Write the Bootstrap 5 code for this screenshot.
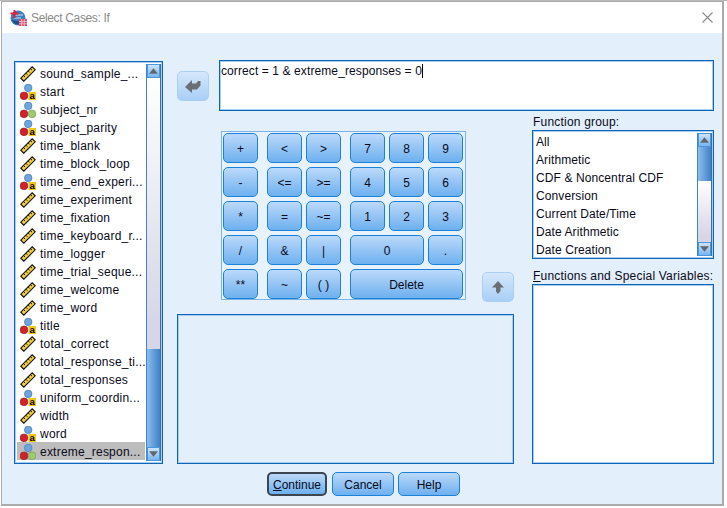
<!doctype html>
<html lang="en"><head><meta charset="utf-8"><title>Select Cases: If</title>
<link href="https://cdn.jsdelivr.net/npm/bootstrap@5.3.0/dist/css/bootstrap.min.css" rel="stylesheet">
<style>
html,body{height:100%;overflow:hidden}
body{background:#fff;font:12px/18px "Liberation Sans",Arial,sans-serif;color:#0a0a1a}
.strip{height:1px;background:#b9b9b9}
.win{width:723px;height:505px;margin-left:1px;border:1px solid #ababab;border-right-width:2px;border-bottom-width:2px;background:#e3effb;display:flex;flex-direction:column}
.titlebar{height:31px;flex:none;background:#fff;color:#8b8b8b;padding-left:8px;gap:4px}
.titletext{letter-spacing:-.35px}
.closex{margin-left:auto;margin-right:9px}
.main{padding:27px 0 0 12px;gap:14px}
.vars{width:149px;height:403px;margin-top:1px;letter-spacing:.22px}
.boxed{border:1px solid #0d65b8;box-shadow:0 0 0 1px #a9cdf0 inset;background:#fff}
.vars,.funcs{position:relative;padding:2px 17px 2px 2px}
.itemrow{height:18px;line-height:18px;white-space:nowrap;padding:0;border:0;background:transparent;color:inherit;display:flex;align-items:center}
.vars .itemrow{padding-left:3px;gap:4px}
.vars .itemrow span{padding-top:2px}
.vars .itemrow svg{flex:none;margin-top:2px}
.itemrow.sel{background:#bdbdbd}
.sbar{position:absolute;top:2px;bottom:2px;right:1px;width:15px;display:flex;flex-direction:column;border-left:1px solid #3e86cb;border-right:1px solid #3d6f9f;background:linear-gradient(90deg,#fff,#cfcfe0)}
.sbtn{height:14px;flex:none;background:linear-gradient(#cfe3fb,#79b4f0);display:flex;align-items:center;justify-content:center;border:1px solid #4a97e0}
.strack{flex:1;background:linear-gradient(#fff,#d6d6e6 90%)}
.sthumb{background:linear-gradient(90deg,#8fbcec,#3e81c8)}
.thumb1{height:98px}
.thumb2{height:34px}
.centerarea{width:537px}
.toprow{gap:10px;height:51px}
.movebtn{width:32px;height:30px;padding:0;border:1px solid #a9cff3;border-radius:5px;background:linear-gradient(#d5e7fb,#a9cff6);display:flex;align-items:center;justify-content:center}
.arrowdown{margin-top:11px}
.expr{width:495px;height:51px;padding:3px 1px;line-height:14px;letter-spacing:.1px}
.caret{display:inline-block;width:1px;height:14px;background:#000;vertical-align:-3px}
.lowerrow{gap:18px}
.midcol{width:337px}
.pad-row{margin-top:20px;margin-left:44px;align-items:flex-end;justify-content:space-between;height:171px}
.calc{width:245px;height:169px;border:1px solid #7fb2e6;padding:1px;gap:9px;background:#e8f2fc;margin-bottom:2px}
.calcgrid{display:grid;grid-auto-rows:30px;row-gap:4px;column-gap:4px;grid-template-columns:repeat(var(--n),35px)}
.g1{--n:1}.g2{--n:2}.g3{--n:3}
.key{padding:1px 0 0;font-size:12px;line-height:1;color:#0a0a1a;border:1px solid #1b82dc;border-radius:5px;background:linear-gradient(#bcd9fa,#6db0ef)}
.key:hover{color:#0a0a1a;border-color:#1b82dc;background:linear-gradient(#bcd9fa,#6db0ef)}
.sp2{grid-column:span 2}.sp3{grid-column:span 3}
.msgbox{height:150px;margin-top:12px;background:#e3effb}
.rightcol{width:182px;padding-top:3px}
.flabel{height:16px;line-height:16px;margin-left:1px;white-space:nowrap;letter-spacing:.2px}
.funcs{height:129px;padding:2px 17px 2px 2px;letter-spacing:.1px}
.funcs .itemrow{padding-left:1px}
.flabel2{margin-top:9px;height:16px}
.specials{height:180px}
.foot{margin-top:8px;gap:4px;padding-left:265px}
.fbtn{height:24px;padding:1px 0 0;font-size:12px;line-height:1;color:#0a0a1a;border:1px solid #1b82dc;border-radius:5px;background:linear-gradient(#bcd9fa,#6db0ef)}
.fbtn:hover{color:#0a0a1a;border-color:#1b82dc;background:linear-gradient(#bcd9fa,#6db0ef)}
.fbtn-focus{width:60px;margin-right:1px;border:2px solid #3c4652}
.fbtn-focus:hover{border-color:#3c4652}
.w62{width:62px}
</style></head><body>
<svg width="0" height="0" class="position-absolute">
<defs>
<symbol id="ruler" viewBox="0 0 16 16"><path d="M0.8 12.2 12.2 0.8 15.2 3.8 3.8 15.2Z" fill="#f4cf3c" stroke="#1a1a1a" stroke-width="1.2"/><path d="M3.5 9.5l1.6 1.6M5.8 7.2l1.6 1.6M8.1 4.9l1.6 1.6M10.4 2.6l1.6 1.6" stroke="#1a1a1a" stroke-width="1"/></symbol>
<symbol id="nom" viewBox="0 0 16 16"><circle cx="8.200" cy="3.900" r="3.800" fill="#6fa5dd" stroke="#3d76b5" stroke-width=".6"/><circle cx="4" cy="11.800" r="3.900" fill="#d3202c" stroke="#8f1a24" stroke-width=".6"/><circle cx="12" cy="11.800" r="3.900" fill="#9ccb72" stroke="#6b9b4a" stroke-width=".6"/></symbol>
<symbol id="str" viewBox="0 0 16 16"><circle cx="8.200" cy="3.900" r="3.800" fill="#6fa5dd" stroke="#3d76b5" stroke-width=".6"/><circle cx="4" cy="11.800" r="3.900" fill="#d3202c" stroke="#8f1a24" stroke-width=".6"/><rect x="8.500" y="8" width="7.500" height="8" fill="#f2c71f"/><text x="12.200" y="15" text-anchor="middle" font-family="Liberation Sans" font-weight="700" font-size="9.500" fill="#000">a</text></symbol>
<symbol id="tri-up" viewBox="0 0 10 6"><path d="M5 0 10 6H0Z" fill="#60686f"/></symbol>
<symbol id="tri-down" viewBox="0 0 10 6"><path d="M0 0H10L5 6Z" fill="#60686f"/></symbol>
</defs></svg>
<div class="strip"></div>
<div class="win">
 <div class="titlebar d-flex align-items-center">
  <svg width="17" height="17" viewBox="0 0 17 17" aria-hidden="true"><circle cx="8" cy="9" r="7.500" fill="#3f7fbc"/><path d="M2 11a7 7 0 0 0 12 2z" fill="#1f4f86"/><path d="M4 9h7M4 6h9" stroke="#cfe2f5" stroke-width="1"/><path d="M4.500 1v8M0.500 4.500h8" stroke="#d6213a" stroke-width="2"/><rect x="9" y="10" width="8" height="7" fill="#d84a6a"/><path d="M9 12.500h8M9 14.800h8M11.700 10v7M14.300 10v7" stroke="#f6c9d4" stroke-width=".8"/></svg>
  <span class="titletext">Select Cases: If</span>
  <svg class="closex" width="11" height="11" viewBox="0 0 11 11" aria-hidden="true"><path d="M.5.500 10.500 10.500M10.500.500.500 10.500" stroke="#8a8a8a" stroke-width="1.100"/></svg>
 </div>
 <div class="main d-flex">
  <div class="vars boxed">
   <div class="list-group list-group-flush">
    <div class="itemrow"><svg width="16" height="16"><use href="#ruler"/></svg><span>sound_sample_...</span></div>
    <div class="itemrow"><svg width="16" height="16"><use href="#str"/></svg><span>start</span></div>
    <div class="itemrow"><svg width="16" height="16"><use href="#nom"/></svg><span>subject_nr</span></div>
    <div class="itemrow"><svg width="16" height="16"><use href="#str"/></svg><span>subject_parity</span></div>
    <div class="itemrow"><svg width="16" height="16"><use href="#ruler"/></svg><span>time_blank</span></div>
    <div class="itemrow"><svg width="16" height="16"><use href="#ruler"/></svg><span>time_block_loop</span></div>
    <div class="itemrow"><svg width="16" height="16"><use href="#str"/></svg><span>time_end_experi...</span></div>
    <div class="itemrow"><svg width="16" height="16"><use href="#ruler"/></svg><span>time_experiment</span></div>
    <div class="itemrow"><svg width="16" height="16"><use href="#ruler"/></svg><span>time_fixation</span></div>
    <div class="itemrow"><svg width="16" height="16"><use href="#ruler"/></svg><span>time_keyboard_r...</span></div>
    <div class="itemrow"><svg width="16" height="16"><use href="#ruler"/></svg><span>time_logger</span></div>
    <div class="itemrow"><svg width="16" height="16"><use href="#ruler"/></svg><span>time_trial_seque...</span></div>
    <div class="itemrow"><svg width="16" height="16"><use href="#ruler"/></svg><span>time_welcome</span></div>
    <div class="itemrow"><svg width="16" height="16"><use href="#ruler"/></svg><span>time_word</span></div>
    <div class="itemrow"><svg width="16" height="16"><use href="#str"/></svg><span>title</span></div>
    <div class="itemrow"><svg width="16" height="16"><use href="#ruler"/></svg><span>total_correct</span></div>
    <div class="itemrow"><svg width="16" height="16"><use href="#ruler"/></svg><span>total_response_ti...</span></div>
    <div class="itemrow"><svg width="16" height="16"><use href="#ruler"/></svg><span>total_responses</span></div>
    <div class="itemrow"><svg width="16" height="16"><use href="#str"/></svg><span>uniform_coordin...</span></div>
    <div class="itemrow"><svg width="16" height="16"><use href="#ruler"/></svg><span>width</span></div>
    <div class="itemrow"><svg width="16" height="16"><use href="#str"/></svg><span>word</span></div>
    <div class="itemrow sel"><svg width="16" height="16"><use href="#nom"/></svg><span>extreme_respon...</span></div>
   </div>
   <div class="sbar">
    <div class="sbtn"><svg width="9" height="6"><use href="#tri-up"/></svg></div>
    <div class="strack"></div>
    <div class="sthumb thumb1"></div>
    <div class="sbtn"><svg width="9" height="6"><use href="#tri-down"/></svg></div>
   </div>
  </div>
  <div class="centerarea">
   <div class="toprow d-flex">
    <button class="btn movebtn arrowdown" type="button" aria-label="Move"><svg width="16" height="14" viewBox="0 0 16 14"><path d="M0 8 7 1V4.500H11L13 2H15.500V6.500L12 10.500H7V14Z" fill="#6a6f75"/></svg></button>
    <div class="expr boxed">correct = 1 &amp; extreme_responses = 0<span class="caret"></span></div>
   </div>
   <div class="lowerrow d-flex">
    <div class="midcol">
     <div class="pad-row d-flex">
      <div class="calc d-flex">
       <div class="calcgrid g1">
        <button class="btn key" type="button">+</button><button class="btn key" type="button">-</button><button class="btn key" type="button">*</button><button class="btn key" type="button">/</button><button class="btn key" type="button">**</button>
       </div>
       <div class="calcgrid g2">
        <button class="btn key" type="button">&lt;</button><button class="btn key" type="button">&gt;</button>
        <button class="btn key" type="button">&lt;=</button><button class="btn key" type="button">&gt;=</button>
        <button class="btn key" type="button">=</button><button class="btn key" type="button">~=</button>
        <button class="btn key" type="button">&amp;</button><button class="btn key" type="button">|</button>
        <button class="btn key" type="button">~</button><button class="btn key" type="button">( )</button>
       </div>
       <div class="calcgrid g3">
        <button class="btn key" type="button">7</button><button class="btn key" type="button">8</button><button class="btn key" type="button">9</button>
        <button class="btn key" type="button">4</button><button class="btn key" type="button">5</button><button class="btn key" type="button">6</button>
        <button class="btn key" type="button">1</button><button class="btn key" type="button">2</button><button class="btn key" type="button">3</button>
        <button class="btn key sp2" type="button">0</button><button class="btn key" type="button">.</button>
        <button class="btn key sp3" type="button">Delete</button>
       </div>
      </div>
      <button class="btn movebtn" type="button" aria-label="Move up"><svg width="12" height="13" viewBox="0 0 12 13"><path d="M6 0 12 6.500H8.500V10L6 13 4 10.500V6.500H0Z" fill="#6a6f75"/></svg></button>
     </div>
     <div class="msgbox boxed"></div>
    </div>
    <div class="rightcol">
     <div class="flabel">Function <u>g</u>roup:</div>
     <div class="funcs boxed">
      <div class="list-group list-group-flush">
       <div class="itemrow">All</div><div class="itemrow">Arithmetic</div><div class="itemrow">CDF &amp; Noncentral CDF</div><div class="itemrow">Conversion</div><div class="itemrow">Current Date/Time</div><div class="itemrow">Date Arithmetic</div><div class="itemrow">Date Creation</div>
      </div>
      <div class="sbar">
       <div class="sbtn"><svg width="9" height="6"><use href="#tri-up"/></svg></div>
       <div class="sthumb thumb2"></div>
       <div class="strack"></div>
       <div class="sbtn"><svg width="9" height="6"><use href="#tri-down"/></svg></div>
      </div>
     </div>
     <div class="flabel flabel2"><u>F</u>unctions and Special Variables:</div>
     <div class="specials boxed"></div>
    </div>
   </div>
  </div>
 </div>
 <div class="foot d-flex">
  <button class="btn fbtn fbtn-focus" type="button"><u>C</u>ontinue</button>
  <button class="btn fbtn w62" type="button">Cancel</button>
  <button class="btn fbtn w62" type="button">Help</button>
 </div>
</div>
</body></html>
